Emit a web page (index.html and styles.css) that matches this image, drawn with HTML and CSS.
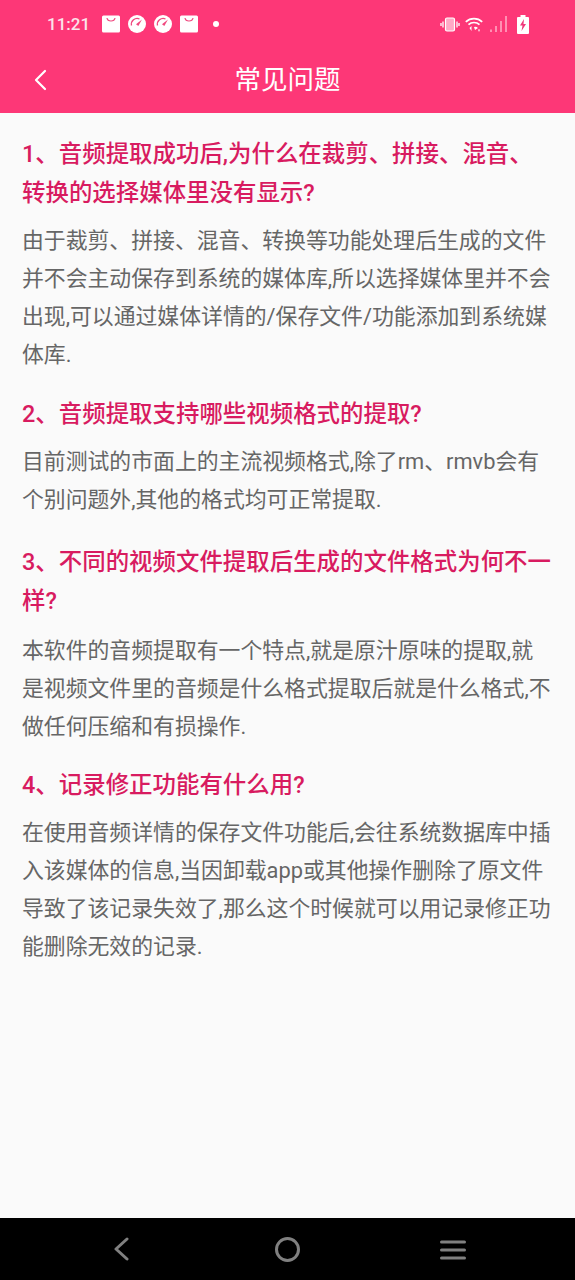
FILE: index.html
```html
<!DOCTYPE html>
<html lang="zh-CN">
<head>
<meta charset="utf-8">
<title>常见问题</title>
<link rel="stylesheet" href="styles.css">
</head>
<body>
<div class="screen">
  <header class="header">
    <div class="status">
      <span class="time">11:21</span>
      <svg class="ic" viewBox="0 0 18 18"><path fill="#fff" d="M1.500 .5h15a1.500 1.500 0 0 1 1.500 1.500v14a1.500 1.500 0 0 1-1.500 1.500h-15A1.500 1.500 0 0 1 0 16V2A1.500 1.500 0 0 1 1.500 .5z"/><path fill="none" stroke="#f0487f" stroke-width="1.200" d="M5 3c.6 4 7.400 4 8 0"/></svg>
      <svg class="ic" viewBox="0 0 18 18"><circle cx="9" cy="9" r="9" fill="#fff"/><path fill="none" stroke="#f0487f" stroke-width="1.300" d="M3.500 10.500a5.800 5.800 0 0 1 8-6.500"/><path fill="#f0487f" d="M14 4.500 10.300 11 8 9.300z"/></svg>
      <svg class="ic" viewBox="0 0 18 18"><circle cx="9" cy="9" r="9" fill="#fff"/><path fill="none" stroke="#f0487f" stroke-width="1.300" d="M3.500 10.500a5.800 5.800 0 0 1 8-6.500"/><path fill="#f0487f" d="M14 4.500 10.300 11 8 9.300z"/></svg>
      <svg class="ic" viewBox="0 0 18 18"><path fill="#fff" d="M1.500 .5h15a1.500 1.500 0 0 1 1.500 1.500v14a1.500 1.500 0 0 1-1.500 1.500h-15A1.500 1.500 0 0 1 0 16V2A1.500 1.500 0 0 1 1.500 .5z"/><path fill="none" stroke="#f0487f" stroke-width="1.200" d="M5 3c.6 4 7.400 4 8 0"/></svg>
      <span class="dot"></span>
      <span class="spacer"></span>
      <svg class="sys vib" viewBox="0 0 20 15"><rect x="5.500" y="1" width="9" height="13" rx="1.500" fill="#ffa9c6" stroke="#fff" stroke-width="1.200"/><path stroke="#fff" stroke-width="1.300" fill="none" d="M3 4.500v6M1 6v3M17 4.500v6M19 6v3"/></svg>
      <svg class="sys wifi" viewBox="0 0 18 15"><g fill="none" stroke="#fff" stroke-width="1.700"><path d="M.8 4.800a12 12 0 0 1 16.400 0"/><path d="M3.500 7.700a8 8 0 0 1 11 0"/></g><path fill="#fff" d="M4.500 11 6.500 9v5zM9 10a4 4 0 0 1 4 1l-3 2zM13 12.500h2L14 15z"/></svg>
      <svg class="sys signal" viewBox="0 0 17 16"><path fill="#ff8fb3" d="M0 13.500h2V16H0zM5 10h2v6H5zM10 5h2v11h-2zM15 0h2v16h-2z"/></svg>
      <svg class="sys batt" viewBox="0 0 12 19"><path fill="#fff" d="M3.500 0h5v2H11a1 1 0 0 1 1 1v15a1 1 0 0 1-1 1H1a1 1 0 0 1-1-1V3a1 1 0 0 1 1-1h2.500z"/><path fill="#f0387a" d="M7 4 3 10.500h2.500L4.500 16 9 9H6.500z"/></svg>
    </div>
    <div class="bar">
      <svg class="back" viewBox="0 0 14 22"><path fill="none" stroke="#fff" stroke-width="2.200" stroke-linecap="round" stroke-linejoin="round" d="M12 2 3 11l9 9"/></svg>
      <h1 class="title">常见问题</h1>
    </div>
  </header>
  <main class="content">
    <section class="qa qa-first">
      <h2 class="q">1、音频提取成功后,为什么在裁剪、拼接、混音、转换的选择媒体里没有显示?</h2>
      <p class="a">由于裁剪、拼接、混音、转换等功能处理后生成的文件并不会主动保存到系统的媒体库,所以选择媒体里并不会出现,可以通过媒体详情的/保存文件/功能添加到系统媒体库.</p>
    </section>
    <section class="qa qa-second">
      <h2 class="q">2、音频提取支持哪些视频格式的提取?</h2>
      <p class="a">目前测试的市面上的主流视频格式,除了rm、rmvb会有个别问题外,其他的格式均可正常提取.</p>
    </section>
    <section class="qa qa-third">
      <h2 class="q">3、不同的视频文件提取后生成的文件格式为何不一样?</h2>
      <p class="a">本软件的音频提取有一个特点,就是原汁原味的提取,就是视频文件里的音频是什么格式提取后就是什么格式,不做任何压缩和有损操作.</p>
    </section>
    <section class="qa">
      <h2 class="q">4、记录修正功能有什么用?</h2>
      <p class="a">在使用音频详情的保存文件功能后,会往系统数据库中插入该媒体的信息,当因卸载app或其他操作删除了原文件导致了该记录失效了,那么这个时候就可以用记录修正功能删除无效的记录.</p>
    </section>
  </main>
  <nav class="nav">
    <svg class="nav-back" viewBox="0 0 16 24"><path fill="none" stroke="#808080" stroke-width="3" stroke-linecap="round" stroke-linejoin="round" d="M14 2 3 12l11 10"/></svg>
    <svg class="nav-home" viewBox="0 0 25 25"><circle cx="12.500" cy="12.500" r="11" fill="none" stroke="#808080" stroke-width="3"/></svg>
    <svg class="nav-menu" viewBox="0 0 26 20"><path fill="none" stroke="#808080" stroke-width="3" stroke-linecap="round" d="M1.500 2h23M1.500 10h23M1.500 18h23"/></svg>
  </nav>
</div>
</body>
</html>
```
FILE: styles.css
```css
* { box-sizing: border-box; }
html, body { margin: 0; padding: 0; }
body { font-family: Roboto, "Noto Sans CJK SC", sans-serif; background: #fafafa; }
.screen { width: 575px; height: 1280px; display: flex; flex-direction: column; overflow: hidden; }
.header { background: #fd3777; height: 113px; flex: none; color: #fff; }
.status { height: 46px; display: flex; align-items: center; padding: 2px 46px 0 47px; }
.time { font-size: 17px; font-weight: 500; margin-right: 12px; color: #fbe3ea; }
.ic { width: 18px; height: 18px; margin-right: 8px; }
.dot { width: 6px; height: 6px; border-radius: 50%; background: #fff; margin-left: 7px; }
.spacer { flex: 1; }
.sys { flex: none; }
.vib { width: 20px; height: 15px; margin-right: 5px; }
.wifi { width: 18px; height: 15px; margin-right: 7px; }
.signal { width: 17px; height: 16px; margin-right: 10px; }
.batt { width: 12px; height: 19px; }
.bar { height: 67px; display: flex; align-items: center; justify-content: center; position: relative; }
.back { position: absolute; left: 33px; top: 23px; width: 14px; height: 22px; }
.title { margin: 0; font-size: 26.5px; font-weight: 400; line-height: 1; position: relative; top: 1px; }
.content { flex: 1; padding: 22px 22px 0; }
.qa { margin-bottom: 22px; }
.qa-first { margin-bottom: 21px; }
.qa-second { margin-bottom: 24px; }
.qa-third { margin-bottom: 20px; }
.q { margin: 0 0 9px; font-size: 23.45px; line-height: 39px; font-weight: 500; color: #d81b60; }
.qa-third .q { margin-bottom: 11px; }
.a { margin: 0; font-size: 21.85px; line-height: 38px; color: #666; }
.nav { height: 62px; flex: none; background: #000; position: relative; display: flex; align-items: center; }
.nav-back { position: absolute; left: 113px; top: 19px; width: 16px; height: 24px; }
.nav-home { position: absolute; left: 275px; top: 19px; width: 25px; height: 25px; }
.nav-menu { position: absolute; left: 440px; top: 22px; width: 26px; height: 20px; }
```
